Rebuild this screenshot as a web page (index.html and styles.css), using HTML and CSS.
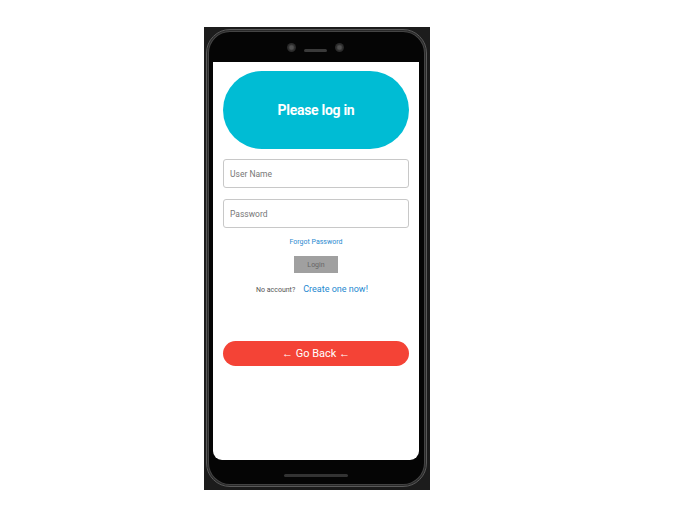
FILE: index.html
```html
<!DOCTYPE html>
<html>
<head>
<meta charset="utf-8">
<link rel="stylesheet" href="styles.css">
</head>
<body>
<div class="phone">
  <div class="bezel">
    <div class="notch">
      <span class="cam"></span>
      <span class="speaker"></span>
      <span class="cam"></span>
    </div>
    <div class="screen">
      <div class="header">Please log in</div>
      <div class="field">User Name</div>
      <div class="field field-2">Password</div>
      <div class="forgot">Forgot Password</div>
      <div class="login-row"><div class="login-btn">Login</div></div>
      <div class="signup-row">
        <span class="no-acc">No account?</span>
        <span class="create">Create one now!</span>
      </div>
      <div class="back-btn">← Go Back ←</div>
    </div>
    <div class="chin"><span class="home"></span></div>
  </div>
</div>
</body>
</html>
```
FILE: styles.css
```css
html, body {
  margin: 0;
  padding: 0;
  background: #ffffff;
  font-family: Roboto, "Liberation Sans", sans-serif;
}
body {
  padding: 27px 0 0 204px;
}
.phone {
  box-sizing: border-box;
  width: 226px;
  height: 463px;
  background: #1c1c1c;
  padding: 2px 3px 3px 2px;
}
.bezel {
  box-sizing: border-box;
  height: 100%;
  border-radius: 24px;
  border: 1px solid #5a5a5a;
  box-shadow: inset 0 0 0 1px #2a2a2a, inset 0 0 0 2px #444444;
  background: #050505;
  padding: 1px 7px 1px 6px;
  display: flex;
  flex-direction: column;
}
.notch {
  height: 31px;
  flex-shrink: 0;
  display: flex;
  align-items: center;
  justify-content: center;
  padding-right: 2px;
}
.cam {
  width: 9px;
  height: 9px;
  border-radius: 50%;
  margin-top: 2px;
  background: radial-gradient(circle, #505050 0 25%, #2e2e2e 50%, #1c1c1c 100%);
}
.speaker {
  width: 23px;
  height: 3px;
  border-radius: 2px;
  background: #3a3a3a;
  margin: 8px 8px 0 8px;
}
.screen {
  flex: 1;
  background: #ffffff;
  border-radius: 0 0 9px 9px;
  padding: 9px 10px 0 10px;
  display: flex;
  flex-direction: column;
}
.header {
  height: 78px;
  border-radius: 39px;
  background: #00bcd4;
  color: #ffffff;
  font-weight: 700;
  font-size: 14px;
  letter-spacing: -0.3px;
  display: flex;
  align-items: center;
  justify-content: center;
  flex-shrink: 0;
}
.field {
  box-sizing: border-box;
  height: 29px;
  margin-top: 10px;
  border: 1px solid #c8c8c8;
  border-radius: 3px;
  font-size: 8.5px;
  color: #777777;
  padding-left: 6px;
  display: flex;
  align-items: center;
  flex-shrink: 0;
}
.field-2 {
  margin-top: 11px;
}
.forgot {
  margin-top: 10px;
  text-align: center;
  font-size: 7px;
  color: #2a8ad0;
  line-height: 9px;
}
.login-row {
  display: flex;
  justify-content: center;
  margin-top: 9px;
}
.login-btn {
  width: 44px;
  height: 17px;
  background: #a0a0a0;
  color: #666666;
  font-size: 7px;
  display: flex;
  align-items: center;
  justify-content: center;
}
.signup-row {
  display: flex;
  justify-content: center;
  align-items: baseline;
  margin-top: 10px;
  gap: 8px;
  padding-right: 8px;
  line-height: 12px;
}
.no-acc {
  font-size: 7px;
  color: #555555;
}
.create {
  font-size: 9px;
  color: #1e88d0;
}
.back-btn {
  margin-top: 45px;
  height: 25px;
  border-radius: 12.5px;
  background: #f44336;
  color: #ffffff;
  font-size: 11px;
  display: flex;
  align-items: center;
  justify-content: center;
  flex-shrink: 0;
}
.chin {
  height: 25px;
  flex-shrink: 0;
  display: flex;
  justify-content: center;
  align-items: center;
}
.home {
  width: 64px;
  height: 3px;
  border-radius: 2px;
  background: #333333;
  margin-top: 5px;
}
```
